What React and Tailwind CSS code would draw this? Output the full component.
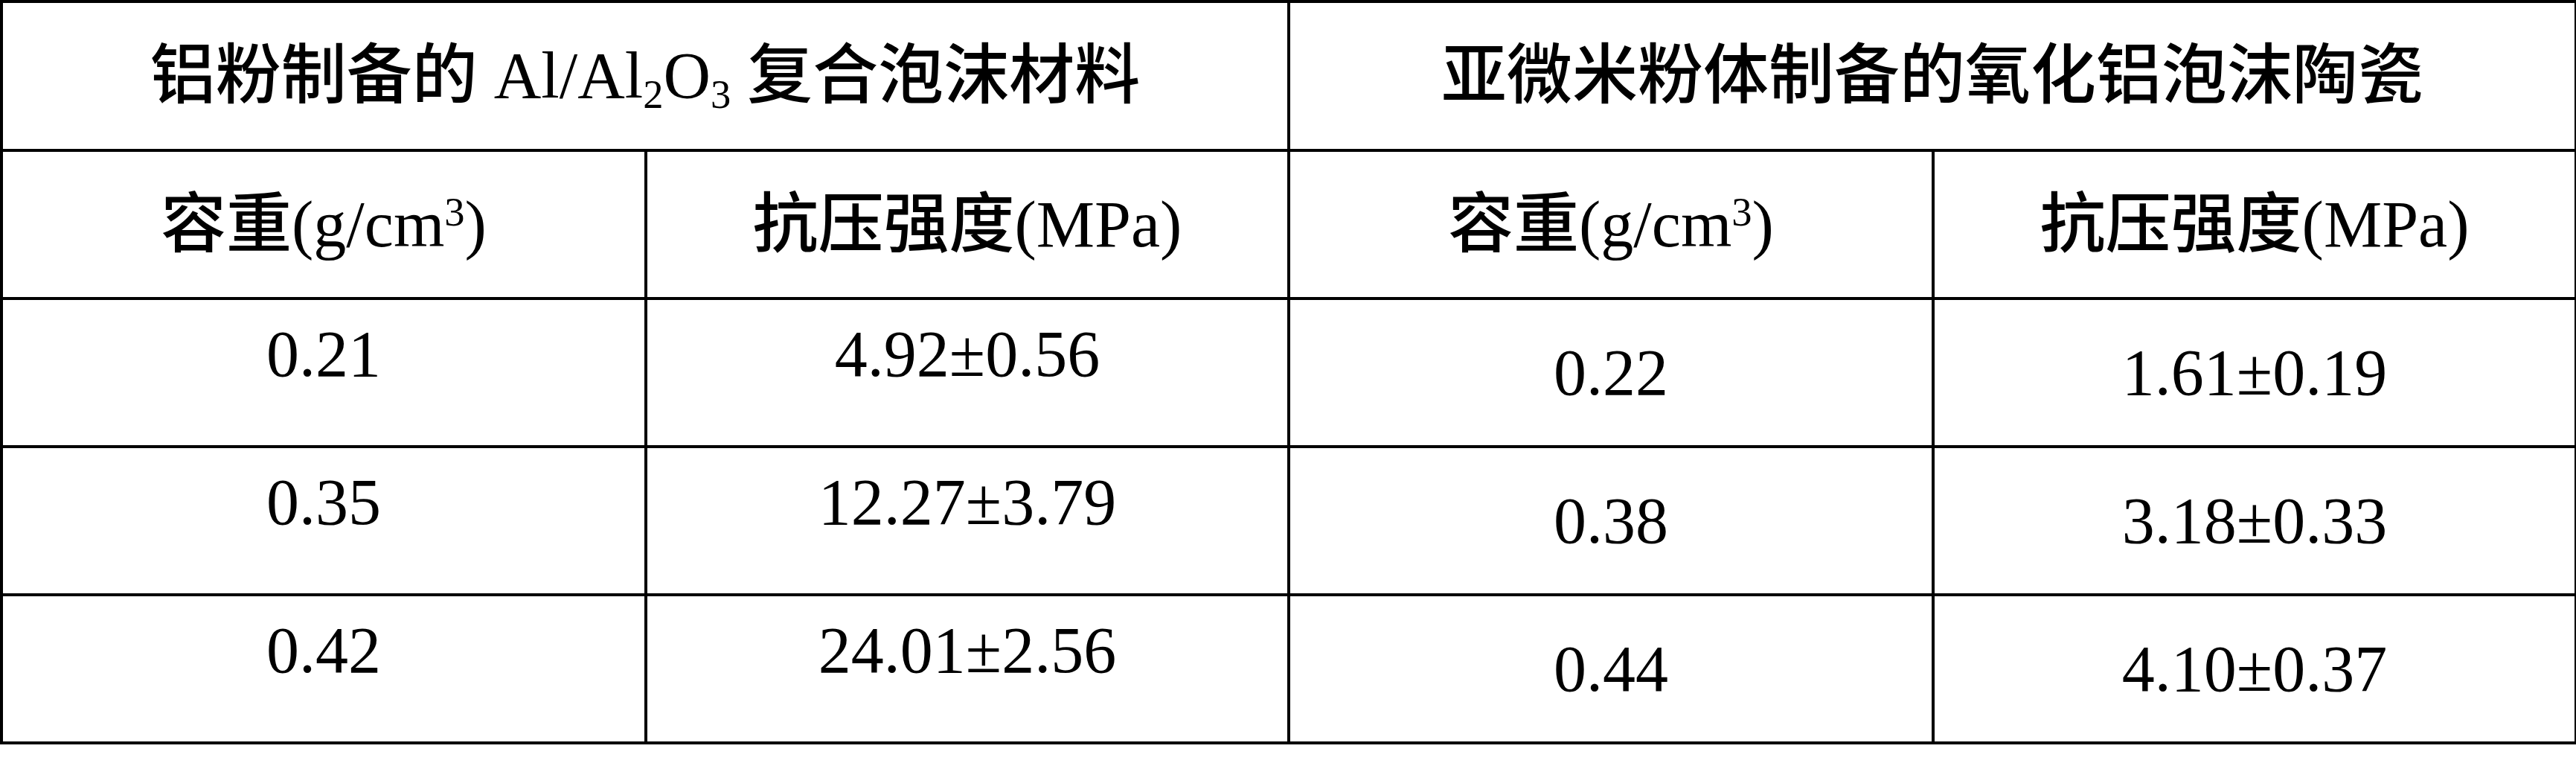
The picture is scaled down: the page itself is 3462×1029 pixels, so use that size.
import React from 'react';

const leftRows = [
  { density: '0.21', strength: '4.92±0.56' },
  { density: '0.35', strength: '12.27±3.79' },
  { density: '0.42', strength: '24.01±2.56' },
];

const rightRows = [
  { density: '0.22', strength: '1.61±0.19' },
  { density: '0.38', strength: '3.18±0.33' },
  { density: '0.44', strength: '4.10±0.37' },
];

const cell = 'border-[4px] border-black text-center align-middle p-0';

const Density = () => (
  <>
    容重(g/cm<sup className="text-[62%]">3</sup>)
  </>
);

export default function App() {
  return (
    <div className="w-[3462px] min-h-[1029px] bg-white text-black font-['Liberation_Serif','Noto_Sans_CJK_SC',serif] font-medium text-[88px] leading-none">
      <table className="w-[3460px] table-fixed border-collapse border-[4px] border-black">
        <colgroup>
          <col className="w-[866px]" />
          <col className="w-[864px]" />
          <col className="w-[866px]" />
          <col className="w-[864px]" />
        </colgroup>
        <tbody>
          <tr className="h-[200px]">
            <td colSpan={2} className={cell}>
              铝粉制备的 Al/Al<sub className="text-[62%]">2</sub>O<sub className="text-[62%]">3</sub> 复合泡沫材料
            </td>
            <td colSpan={2} className={cell}>
              亚微米粉体制备的氧化铝泡沫陶瓷
            </td>
          </tr>
          <tr className="h-[199px]">
            <td className={cell}><Density /></td>
            <td className={cell}>抗压强度(MPa)</td>
            <td className={cell}><Density /></td>
            <td className={cell}>抗压强度(MPa)</td>
          </tr>
          {leftRows.map((l, i) => (
            <tr key={l.density} className="h-[199px]">
              <td className={`${cell} pb-[50px]`}>{l.density}</td>
              <td className={`${cell} pb-[50px]`}>{l.strength}</td>
              <td className={cell}>{rightRows[i].density}</td>
              <td className={cell}>{rightRows[i].strength}</td>
            </tr>
          ))}
        </tbody>
      </table>
    </div>
  );
}
